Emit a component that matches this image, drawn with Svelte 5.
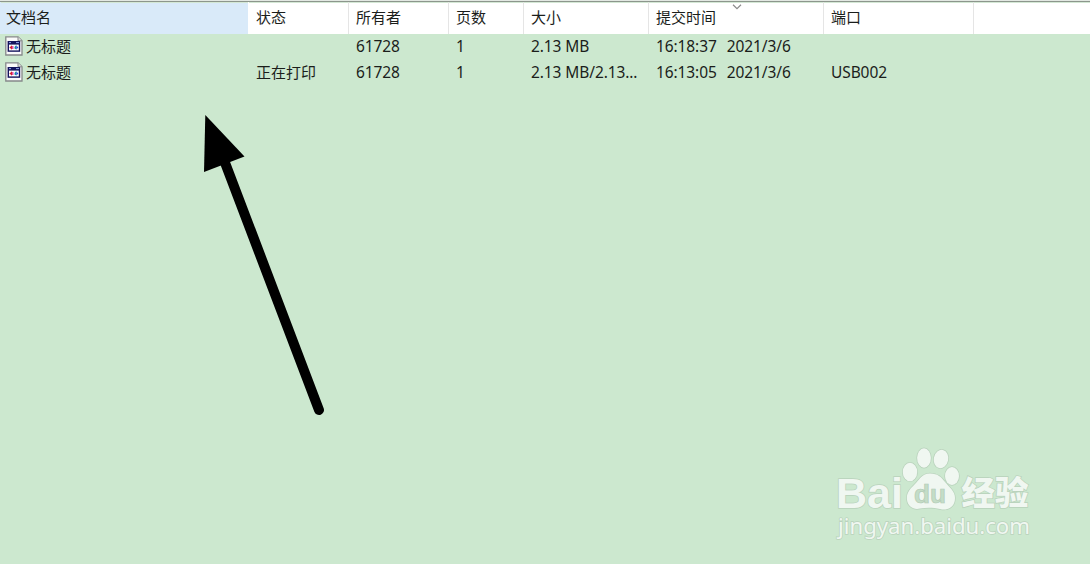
<script>
	const columns = [
		{ key: 'name', label: '文档名' },
		{ key: 'status', label: '状态' },
		{ key: 'owner', label: '所有者' },
		{ key: 'pages', label: '页数' },
		{ key: 'size', label: '大小' },
		{ key: 'submitted', label: '提交时间' },
		{ key: 'port', label: '端口' }
	];

	let sortKey = 'submitted';
	let activeKey = 'name';

	const jobs = [
		{
			name: '无标题',
			status: '',
			owner: '61728',
			pages: '1',
			size: '2.13 MB',
			time: '16:18:37',
			date: '2021/3/6',
			port: ''
		},
		{
			name: '无标题',
			status: '正在打印',
			owner: '61728',
			pages: '1',
			size: '2.13 MB/2.13...',
			time: '16:13:05',
			date: '2021/3/6',
			port: 'USB002'
		}
	];
</script>

<div class="queue">
	<div class="header grid">
		{#each columns as column}
			<div class="head" class:active={column.key === activeKey}>
				<span>{column.label}</span>
				{#if column.key === sortKey}
					<svg class="sort" width="10" height="6" viewBox="0 0 10 6">
						<path d="M1 0.8 L5 4.6 L9 0.8" fill="none" stroke="#8b8b8b" stroke-width="1.2" />
					</svg>
				{/if}
			</div>
		{/each}
		<div class="head"></div>
	</div>

	<div class="rows">
		{#each jobs as job}
			<div class="grid row">
				<div class="cell name">
					<svg width="18" height="20" viewBox="0 0 18 20">
						<path d="M0.8 0.8 H13 L17 4.8 V19 H0.8 Z" fill="#fafafa" stroke="#85888a" stroke-width="1.3" />
						<path d="M13 0.8 V4.8 H17" fill="#ddd" stroke="#85888a" />
						<rect x="2.6" y="5" width="12.6" height="10.8" fill="#14145c" />
						<rect x="4" y="8.6" width="9.8" height="5.8" fill="#fff" />
						<path d="M4 6.6 H6 M11 6.6 H14" stroke="#8fa4e8" />
						<path d="M4.4 11.5 L7 9.2 V13.8 Z" fill="#d2232e" />
						<path d="M7 10 H8.5 V13 H7 Z" fill="#e44da8" />
						<path d="M9.5 11 L11.3 9 V13.6 L9.5 12.5 Z" fill="#1689a0" />
						<path d="M11.3 9.6 L13.4 11.5 L11.3 13.4 Z" fill="#234bd5" />
					</svg>
					<span>{job.name}</span>
				</div>
				<div class="cell">{job.status}</div>
				<div class="cell number">{job.owner}</div>
				<div class="cell number">{job.pages}</div>
				<div class="cell number">{job.size}</div>
				<div class="cell number time"><span>{job.time}</span><span>{job.date}</span></div>
				<div class="cell number">{job.port}</div>
			</div>
		{/each}
	</div>

	<svg class="arrow" width="150" height="330" viewBox="190 100 150 330">
		<path d="M224 160 L319 410" stroke="#000" stroke-width="10" stroke-linecap="round" />
		<path d="M205.3 115 L244.5 156.5 L204 172 Z" />
	</svg>

	<svg class="watermark" width="230" height="120" viewBox="820 430 230 120">
		<g class="mark">
			<text class="latin" x="836" y="508" font-size="43" textLength="67" lengthAdjust="spacingAndGlyphs">Bai</text>
			<ellipse cx="910" cy="472" rx="7.2" ry="9.3" />
			<ellipse cx="924" cy="458" rx="6.9" ry="9.7" />
			<ellipse cx="941" cy="459" rx="7.2" ry="9.2" transform="rotate(12 941 459)" />
			<ellipse cx="952" cy="476" rx="7" ry="9" />
			<path d="M930 473.5 C922 473.5 919 480 915 484 C910 489 906 493 907 500 C908 507 914 510 920 508.5 C927 507.5 933 507.5 940 509 C948 511 955 507 955 498 C955 491 949 487 945 482 C941 477 938 473.5 930 473.5 Z" />
			<text class="chinese" x="961.5" y="505" font-size="33" textLength="67" lengthAdjust="spacingAndGlyphs">经验</text>
			<text class="url" x="838" y="534" font-size="22.5" textLength="192" lengthAdjust="spacingAndGlyphs">jingyan.baidu.com</text>
		</g>
		<text class="du" x="914" y="503" font-size="26" textLength="32" lengthAdjust="spacingAndGlyphs">du</text>
	</svg>
</div>

<style>
	:global(body) {
		background: #cce8cf;
	}

	.queue {
		position: relative;
		height: 564px;
		box-sizing: border-box;
		overflow: hidden;
		border-top: 1px solid #e3e8e3;
		background: #cce8cf;
		color: #1b1e1b;
		font-family: 'Noto Sans', 'Noto Sans CJK SC', sans-serif;
		font-size: 15px;
	}

	.grid {
		display: grid;
		grid-template-columns: 248px 100px 100px 75px 125px 175px 150px 1fr;
	}

	.header {
		height: 33px;
		box-sizing: border-box;
		border-top: 1px solid #8c968c;
		background: #fff;
	}

	.head {
		position: relative;
		display: flex;
		align-items: center;
		padding-left: 7px;
		border-left: 1px solid #e5e5e5;
		box-shadow: inset 0 1px #d4e8d5;
		line-height: 28px;
		padding-bottom: 2px;
	}

	.active {
		padding-left: 5px;
		border-left-color: #d9eaf9;
		background: #d9eaf9;
	}

	.active + .head {
		border-left-color: #fff;
	}

	.sort {
		position: absolute;
		top: 2px;
		left: 83px;
	}

	.row {
		height: 26px;
		line-height: 24px;
	}

	.cell {
		padding-left: 8px;
		white-space: pre;
	}

	.number {
		font-size: 15.5px;
		letter-spacing: -0.1px;
	}

	.name {
		display: flex;
		align-items: flex-start;
		gap: 3px;
		padding-left: 5px;
	}

	.name svg {
		margin-top: 2px;
	}

	.time {
		display: flex;
		gap: 10px;
	}

	.arrow {
		position: absolute;
		top: 99px;
		left: 190px;
	}

	.watermark {
		position: absolute;
		top: 429px;
		left: 820px;
	}

	.mark {
		fill: #f0f7f1;
		stroke: #b9d2bc;
		stroke-width: 1.5px;
		paint-order: stroke;
	}

	.latin {
		font-family: 'Liberation Sans', sans-serif;
		font-weight: bold;
	}

	.chinese {
		font-family: 'Noto Sans CJK SC', sans-serif;
		font-weight: 900;
	}

	.url {
		font-family: 'Noto Sans', sans-serif;
	}

	.du {
		fill: #c4ddc7;
		stroke: #b3cbb6;
		stroke-width: 0.7px;
		font-family: 'Liberation Sans', sans-serif;
		font-weight: bold;
	}
</style>
